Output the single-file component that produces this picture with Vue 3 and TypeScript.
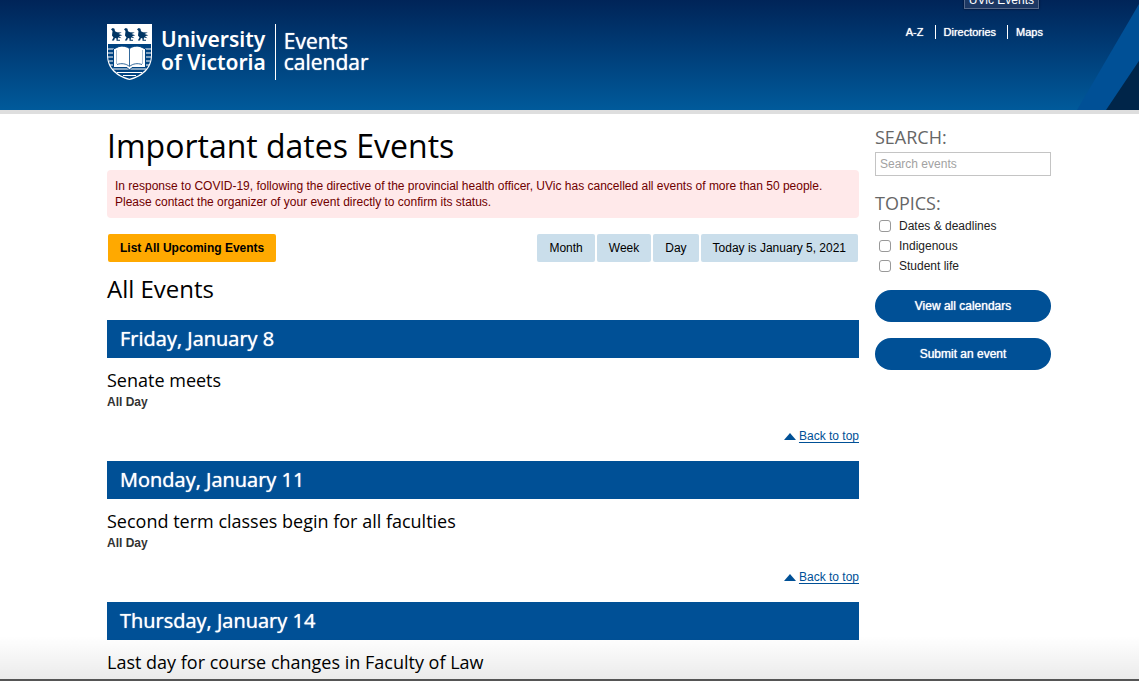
<script setup lang="ts">
import { ref } from 'vue'

interface CalendarDay {
  id: string
  date: string
  events: { title: string; time: string }[]
}

const utilityLinks: string[] = ['A-Z', 'Directories', 'Maps']
const views: string[] = ['Month', 'Week', 'Day', 'Today is January 5, 2021']
const topics: { id: string; label: string }[] = [
  { id: 'dates', label: 'Dates & deadlines' },
  { id: 'indigenous', label: 'Indigenous' },
  { id: 'student', label: 'Student life' },
]
const days: CalendarDay[] = [
  { id: 'jan-8', date: 'Friday, January 8', events: [{ title: 'Senate meets', time: 'All Day' }] },
  {
    id: 'jan-11',
    date: 'Monday, January 11',
    events: [{ title: 'Second term classes begin for all faculties', time: 'All Day' }],
  },
  {
    id: 'jan-14',
    date: 'Thursday, January 14',
    events: [{ title: 'Last day for course changes in Faculty of Law', time: 'All Day' }],
  },
]
const query = ref('')
const selected = ref<string[]>([])
</script>

<template>
  <div id="top" class="page">
    <header class="header">
      <svg class="corner" viewBox="0 0 62 110" aria-hidden="true">
        <path d="M62 4V61L29 110H0z" fill="#005096" />
        <path d="M62 61V110H29z" fill="#002549" />
      </svg>
      <div class="tooltip" role="tooltip">UVic Events</div>
      <div class="brand">
        <a class="logo" href="#top">
          <svg class="crest" viewBox="0 0 45 56" aria-hidden="true">
            <path d="M0 0H45V31C45 45 35 53 22.500 56C10 53 0 45 0 31z" fill="#fff" />
            <path d="M1 20H44V31C44 43.500 35 51.500 22.500 54.700C10 51.500 1 43.500 1 31z" fill="#004381" />
            <g stroke="#fff" stroke-width="1.200" fill="none">
              <path d="M1 25H44M1 29H44M1 33H44M2 37H43M3 41H42M6 45H39M10 48.500H35M16 51.500H29" />
            </g>
            <path d="M6.500 25L12 22.500C16 21.500 20 22.500 22.500 24.500C25 22.500 29 21.500 33 22.500L38.500 25V43.500H25L22.500 46L20 43.500H6.500z" fill="#fff" stroke="#004381" stroke-width="1" />
            <path d="M10 40.500C14.500 39 19 39.500 22.500 42.500C26 39.500 30.500 39 35 40.500M22.500 25V42" fill="none" stroke="#004381" stroke-width=".8" />
            <path d="M9.500 26V40M35.500 26V40" stroke="#7f9fbd" stroke-width=".7" />
            <g fill="#003564">
              <path id="martlet" d="M4 5.200L5.800 4L7.500 4.800L8 7.200L10 8.300L14.800 8.500L11.500 10L15.300 11.300L12 12.200L14.500 14.200L11 13.500L10.700 15.700H13V16.700H9.500V14.500L8 14L7 16.500H4.800L6.500 13.500L5 11.500L5.500 7z" />
              <use href="#martlet" x="13" />
              <use href="#martlet" x="26" />
            </g>
          </svg>
          <span class="wordmark">University<br />of Victoria</span>
        </a>
        <a class="section-name" href="#top">Events<br />calendar</a>
      </div>
      <nav class="utility" aria-label="Utility">
        <a v-for="link in utilityLinks" :key="link" href="#top">{{ link }}</a>
      </nav>
    </header>

    <div class="content">
      <main class="main">
        <h1>Important dates Events</h1>
        <p class="alert">
          In response to COVID-19, following the directive of the provincial health officer, UVic has cancelled all
          events of more than 50 people. Please contact the organizer of your event directly to confirm its status.
        </p>
        <div class="toolbar">
          <button class="list-all" type="button">List All Upcoming Events</button>
          <div class="views">
            <button v-for="view in views" :key="view" type="button">{{ view }}</button>
          </div>
        </div>
        <h2>All Events</h2>
        <section v-for="day in days" :key="day.id" class="day">
          <h3>{{ day.date }}</h3>
          <article v-for="event in day.events" :key="event.title">
            <h4>{{ event.title }}</h4>
            <p class="time">{{ event.time }}</p>
          </article>
          <div class="back">
            <svg viewBox="0 0 12 7" aria-hidden="true"><path d="M0 7L6 0L12 7z" fill="#005096" /></svg>
            <a href="#top">Back to top</a>
          </div>
        </section>
      </main>

      <aside class="sidebar">
        <form role="search" @submit.prevent>
          <label class="heading" for="search">SEARCH:</label>
          <input id="search" v-model="query" class="search" type="text" placeholder="Search events" />
          <fieldset>
            <legend class="heading">TOPICS:</legend>
            <label v-for="topic in topics" :key="topic.id" class="topic" :for="topic.id">
              <input :id="topic.id" v-model="selected" type="checkbox" :value="topic.id" />
              {{ topic.label }}
            </label>
          </fieldset>
        </form>
        <div class="actions">
          <a href="#top">View all calendars</a>
          <a href="#top">Submit an event</a>
        </div>
      </aside>
    </div>
    <div class="shade" aria-hidden="true"></div>
  </div>
</template>

<style>
body {
  margin: 0;
  background: #fff;
}
</style>

<style scoped>
.page {
  position: relative;
  height: 100vh;
  overflow: hidden;
  font: 12px/16px 'Liberation Sans', Arial, sans-serif;
  color: #333;
}

.header {
  position: relative;
  display: flex;
  justify-content: space-between;
  align-items: flex-start;
  box-sizing: border-box;
  height: 114px;
  padding: 24px 96px 0 107px;
  border-bottom: 4px solid #dedede;
  background: linear-gradient(#002458, #005a9b) padding-box;
}

.corner {
  position: absolute;
  top: 0;
  right: 0;
  height: 110px;
}

.tooltip {
  position: absolute;
  right: 100px;
  bottom: 101px;
  padding: 0 4px;
  border: 1px solid #56698a;
  box-shadow: 0 0 2px #000c24;
  background: #1c3763;
  color: #fff;
  font-size: 12px;
}

.brand,
.logo {
  display: flex;
}

.brand a {
  color: #fff;
  text-decoration: none;
}

.crest {
  width: 45px;
  height: 56px;
}

.wordmark {
  padding: 4px 9px 0 9px;
  font: 600 21px/23px 'Noto Sans', sans-serif;
}

.section-name {
  padding: 7px 0 0 8px;
  border-left: 1px solid #fff;
  font: 21px/21px 'Open Sans', sans-serif;
  text-shadow: 0 0 1px #fff;
}

.utility {
  display: flex;
  padding-top: 1px;
}

.utility a {
  padding: 0 11px 0 8px;
  color: #fff;
  font-size: 11px;
  line-height: 14px;
  text-decoration: none;
  text-shadow: 0 0 1px #fff;
}

.utility a + a {
  border-left: 1px solid #fff;
}

.utility a:last-child {
  padding-right: 0;
}

.content {
  display: grid;
  grid-template-columns: minmax(0, 1fr) 176px;
  gap: 16px;
  padding: 12px 88px 0 107px;
}

h1,
h2,
h3,
h4 {
  margin: 0;
  color: #000;
  font-family: 'Open Sans', sans-serif;
  font-weight: 400;
}

h1 {
  font-size: 32px;
  line-height: 40px;
  padding-bottom: 4px;
}

.alert {
  margin: 0 0 16px;
  padding: 8px;
  border-radius: 4px;
  background: #ffe9ea;
  color: #700000;
}

.toolbar {
  display: flex;
  justify-content: space-between;
  padding: 0 1px;
}

.views {
  display: flex;
  gap: 2px;
}

button {
  padding: 6px 12px;
  border: 0;
  border-radius: 2px;
  background: #cadeeb;
  color: #000;
  font: inherit;
}

.list-all {
  background: #ffa900;
  font-weight: 700;
}

h2 {
  margin: 11px 0 15px;
  font-size: 24px;
  line-height: 32px;
}

.day {
  margin-bottom: 17px;
}

h3 {
  padding: 5px 13px;
  background: #005096;
  color: #fff;
  font-size: 20px;
  line-height: 28px;
  text-shadow: 0 0 1px #fff;
}

h4 {
  margin-top: 10px;
  font-size: 18px;
  line-height: 24px;
}

.time {
  margin: 2px 0 18px;
  font-weight: 700;
}

.back {
  display: flex;
  align-items: center;
  justify-content: flex-end;
  gap: 3px;
}

.back svg {
  width: 12px;
  height: 7px;
}

.back a {
  color: #005096;
  text-underline-offset: 2px;
}

.sidebar {
  color: #222;
}

.heading {
  display: block;
  padding: 0;
  color: #666;
  font: 18px/22px 'Open Sans', sans-serif;
}

.search {
  display: block;
  box-sizing: border-box;
  width: 100%;
  height: 24px;
  margin: 4px 0 16px;
  padding: 0 4px;
  border: 1px solid #c4c4c4;
  font: inherit;
}

.search::placeholder {
  color: #a2a2a2;
}

fieldset {
  margin: 0;
  padding: 0;
  border: 0;
}

legend {
  margin-bottom: 2px;
}

.topic {
  display: flex;
  align-items: center;
  gap: 8px;
  height: 20px;
  padding-left: 4px;
}

.topic input {
  appearance: none;
  box-sizing: border-box;
  width: 12px;
  height: 12px;
  margin: 0;
  border: 1px solid #999;
  border-radius: 3px;
  background: #fff;
}

.topic input:checked {
  background: #005096;
}

.actions {
  display: grid;
  gap: 16px;
  margin-top: 14px;
}

.actions a {
  border-radius: 16px;
  background: #005096;
  color: #fff;
  line-height: 32px;
  text-align: center;
  text-decoration: none;
  text-shadow: 0 0 1px #fff;
}

.shade {
  position: absolute;
  right: 0;
  bottom: 0;
  left: 0;
  height: 43px;
  border-bottom: 2px solid #555;
  background: linear-gradient(#0000, #00000014);
  pointer-events: none;
}
</style>
